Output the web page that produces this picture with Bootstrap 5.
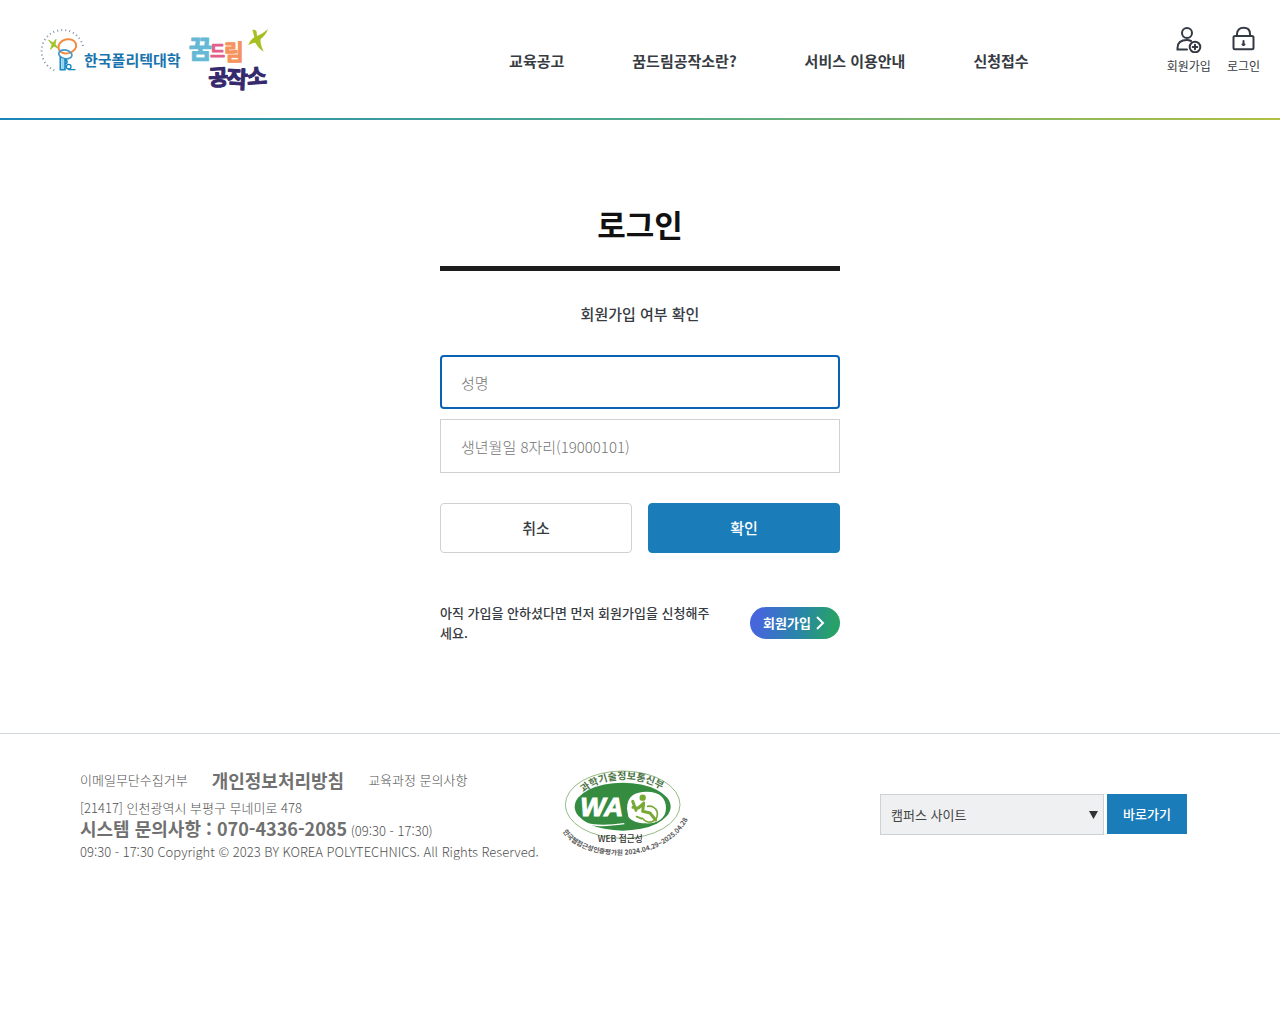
<!DOCTYPE html>
<html lang="ko">
<head>
<meta charset="utf-8">
<meta name="viewport" content="width=device-width, initial-scale=1">
<title>로그인 - 꿈드림공작소</title>
<link href="https://cdn.jsdelivr.net/npm/bootstrap@5.3.0/dist/css/bootstrap.min.css" rel="stylesheet">
<style>
  body { font-family: "Noto Sans CJK KR", "Noto Sans", sans-serif; font-size: 13px; line-height: 20px; color: #373b42; background: #fff; }
  a { color: inherit; text-decoration: none; }
  .medium { font-weight: 500; }
  .site-header { border-bottom: 2px solid; border-image: linear-gradient(90deg, #1a86b8, #51a98c 50%, #b0c043) 1; }
  .header-inner { min-height: 118px; padding: 26px 20px 0 38px; }
  .brand-col { min-width: 333px; }
  .main-menu { gap: 68px; padding-top: 24px; font-size: 15px; line-height: 22px; font-weight: 700; }
  .util-menu { gap: 16px; font-size: 12px; line-height: 18px; }
  .util-menu svg { display: block; margin: 0 auto 4px; }
  .login-box { width: 100%; max-width: 400px; padding: 80px 0 90px; }
  .login-title { font-size: 31px; line-height: 48px; font-weight: 700; color: #111; padding-bottom: 18px; margin-bottom: 32px; border-bottom: 5px solid #1c1c1c; }
  .login-sub { font-size: 15px; line-height: 22px; margin-bottom: 30px; }
  .login-input, .login-input:focus { height: 54px; padding: 0 20px; border: 1px solid #d0d0d0; border-radius: 0; font-size: 15px; box-shadow: none; margin-bottom: 10px; }
  .login-input::placeholder { color: #757575; font-weight: 300; }
  .login-input:focus { border: 2px solid #0a62b4; border-radius: 4px; padding: 0 19px; }
  .login-actions { margin: 30px 0 50px; }
  .btn-login { height: 50px; font-size: 15px; border-radius: 4px; padding: 0; border: 1px solid #d0d0d0; color: #373b42; }
  .btn-ok, .btn-go { background: #1a7cb9; border-color: #1a7cb9; color: #fff; }
  .join-text { max-width: 270px; }
  .join-pill { width: 90px; height: 32px; font-weight: 700; color: #fff; background: linear-gradient(100deg, #4666dc 10%, #2886a8 55%, #28a168 90%); }
  .site-footer { border-top: 1px solid #d2dadd; color: #505050; font-weight: 300; }
  .footer-inner { padding: 34px 80px 0; }
  .footer-info { width: 460px; margin-right: 21px; }
  .footer-links { gap: 24px; line-height: 24px; margin-bottom: 6px; }
  .emph { font-size: 18px; font-weight: 700; line-height: 20px; color: #707070; }
  .copy-line { line-height: 22px; }
  .site-jump { gap: 3px; margin: 26px 13px 0 auto; }
  .site-select { width: 224px; height: 41px; border: 1px solid #cfd2d4; background: #eef0f1; color: #444; padding: 0 10px; appearance: none; font-size: 13px; border-radius: 0; }
  .select-arrow { right: 6px; top: 17px; pointer-events: none; }
  .btn-go { width: 80px; height: 40px; font-size: 13px; border-radius: 0; padding: 0; border: 0; }
  .btn-go:hover, .btn-ok:hover { background: #15699e; color: #fff; }
</style>
</head>
<body>
<header class="site-header">
  <div class="header-inner d-flex align-items-start">
    <div class="brand-col">
      <a href="#" aria-label="한국폴리텍대학 꿈드림공작소">
        <svg class="d-block" width="232" height="68" viewBox="24 18 696 204" fill="none" stroke-linecap="round" stroke-linejoin="round">
          <path d="M73 151A63 63 0 1 1 160 84" stroke="#8296a8" stroke-width="6" stroke-dasharray="3 9" stroke-linecap="butt"/>
          <path d="M57 61 69 69 78 58 75 72 83 84 72 78 62 88 66 75Z" fill="#a3c52f" stroke="#a3c52f" stroke-width="3"/>
          <ellipse cx="112" cy="79" rx="27" ry="21" transform="rotate(-15 112 79)" stroke="#ef8c43" stroke-width="6"/>
          <ellipse cx="106" cy="103" rx="20" ry="13" transform="rotate(12 106 103)" stroke="#4698cd" stroke-width="5"/>
          <path d="M91 148V112M91 149H105V118C112 120 114 130 106 131" stroke="#1687c4" stroke-width="5"/>
          <path d="M98 143V119" stroke="#8cd0ea" stroke-width="7"/>
          <circle cx="116" cy="140" r="7" stroke="#1687c4" stroke-width="4"/>
          <path d="M116 149H135" stroke="#1687c4" stroke-width="4"/>
          <g font-family="Noto Sans CJK KR, sans-serif" font-weight="700">
            <text x="162" y="139" font-size="45" fill="#1874ae">한국폴리텍대학</text>
            <g font-weight="700" stroke-width="3">
              <text x="476" y="114" font-size="76" fill="#65b9d4" stroke="#65b9d4">꿈</text>
              <text x="541" y="112" font-size="48" fill="#e45c8c" stroke="#e45c8c">드</text>
              <text x="582" y="119" font-size="64" fill="#f4935d" stroke="#f4935d">림</text>
              <text x="534" y="196" font-size="66" fill="#35286c" stroke="#35286c" transform="rotate(-4 565 170)">공</text>
              <text x="590" y="203" font-size="70" fill="#35286c" stroke="#35286c" transform="rotate(3 615 170)">작</text>
              <text x="650" y="193" font-size="66" fill="#35286c" stroke="#35286c" transform="rotate(-4 680 170)">소</text>
            </g>
          </g>
          <path d="M667 29C674 29 679 30 680 36L681 48C694 43 704 36 714 27C709 42 699 52 692 57C690 67 694 79 701 95C688 86 680 76 676 68C669 68 662 71 655 76C658 65 665 57 673 52C671 43 670 37 667 29Z" fill="#a8bf22"/>
        </svg>
      </a>
    </div>
    <nav class="main-menu d-flex flex-fill justify-content-center text-nowrap" aria-label="주 메뉴">
      <a href="#">교육공고</a><a href="#">꿈드림공작소란?</a><a href="#">서비스 이용안내</a><a href="#">신청접수</a>
    </nav>
    <div class="util-menu d-flex text-center text-nowrap">
      <a href="#">
        <svg width="27" height="27" viewBox="0 0 27 27" fill="none" stroke="#343a43" stroke-width="2" stroke-linecap="round"><circle cx="12" cy="7" r="5"/><path d="M12 23.500H2.500V22C2.500 16 7 14 12 14Q14 14 16 15"/><circle cx="20" cy="21" r="5.300"/><path d="M20 18.700V23.300M17.700 21H22.300"/></svg>
        회원가입</a>
      <a href="#">
        <svg width="27" height="27" viewBox="0 0 27 27" fill="none" stroke="#343a43" stroke-width="2" stroke-linecap="round"><rect x="3.500" y="10" width="20" height="13.300" rx="1.500"/><path d="M7 10V8C7 4 9.500 1.800 13.500 1.800S20 4 20 8V10M13.500 15V19"/><path d="M12.500 18.500H14.500"/></svg>
        로그인</a>
    </div>
  </div>
</header>

<main class="login-box mx-auto">
  <h1 class="login-title text-center">로그인</h1>
  <p class="login-sub medium text-center">회원가입 여부 확인</p>
  <form onsubmit="return false">
    <label class="visually-hidden" for="userName">성명</label>
    <input class="form-control login-input" id="userName" type="text" placeholder="성명" autofocus>
    <label class="visually-hidden" for="birth">생년월일 8자리</label>
    <input class="form-control login-input" id="birth" type="text" placeholder="생년월일 8자리(19000101)">
    <div class="login-actions d-flex gap-3">
      <button class="btn btn-login medium flex-fill w-50" type="button">취소</button>
      <button class="btn btn-login btn-ok medium flex-fill w-50" type="submit">확인</button>
    </div>
  </form>
  <div class="d-flex justify-content-between align-items-center">
    <p class="join-text medium mb-0">아직 가입을 안하셨다면 먼저 회원가입을 신청해주세요.</p>
    <a class="join-pill rounded-pill d-flex align-items-center justify-content-center gap-1" href="#">회원가입
      <svg width="12" height="16" viewBox="0 0 12 16" fill="none" stroke="#fff" stroke-width="2"><path d="m2 2 6 6-6 6"/></svg></a>
  </div>
</main>

<footer class="site-footer">
  <div class="footer-inner d-flex align-items-start">
    <div class="footer-info text-nowrap">
      <div class="footer-links d-flex align-items-center"><a href="#">이메일무단수집거부</a><a class="emph" href="#">개인정보처리방침</a><a href="#">교육과정 문의사항</a></div>
      <address class="mb-0">[21417] 인천광역시 부평구 무네미로 478</address>
      <div><span class="emph">시스템 문의사항 : 070-4336-2085</span> (09:30 - 17:30)</div>
      <div class="copy-line">09:30 - 17:30 Copyright © 2023 BY KOREA POLYTECHNICS. All Rights Reserved.</div>
    </div>
    <a href="#" aria-label="WEB 접근성 품질인증">
      <svg class="d-block" width="128" height="92" viewBox="18 12 384 276" font-family="Noto Sans CJK KR, sans-serif" font-weight="700">
        <defs>
          <path id="sealTop" d="M86 87C145 34 263 30 342 92"/>
          <path id="sealBottom" d="M24 202C75 296 330 310 402 160"/>
        </defs>
        <ellipse cx="203" cy="122" rx="172" ry="101" fill="#fff" stroke="#93bb84" stroke-width="3"/>
        <ellipse cx="203" cy="128" rx="144" ry="72" fill="#358c40"/>
        <path d="M67 160C90 190 150 187 208 179" fill="none" stroke="#fff" stroke-width="4"/>
        <path d="M216 134C216 96 240 83 275 83C315 83 333 103 333 132C333 164 306 180 270 178C246 177 229 170 220 158Z" fill="#fff"/>
        <text x="76" y="156" font-family="Liberation Sans, sans-serif" font-size="80" font-style="italic" fill="#fff" stroke="#fff" stroke-width="3">WA</text>
        <g fill="none" stroke="#78a936" stroke-width="9" stroke-linecap="round" stroke-linejoin="round">
          <circle cx="263" cy="101" r="5" fill="#78a936"/>
          <path d="M266 117 263 142 285 147 302 168M264 120 250 132 234 130M233 112 243 139"/>
          <path d="M278 127A24 24 0 1 1 263 163" stroke-width="5"/>
          <path d="M245 158 260 164" stroke-width="6"/>
        </g>
        <text font-size="30" fill="#4d7547"><textPath href="#sealTop">과학기술정보통신부</textPath></text>
        <text x="128" y="234" font-size="26" font-weight="500" fill="#333">WEB 접근성</text>
        <text font-size="20" fill="#555"><textPath href="#sealBottom">한국웹접근성인증평가원 2024.04.29~2025.04.28</textPath></text>
      </svg>
    </a>
    <form class="site-jump d-flex" onsubmit="return false">
      <div class="position-relative">
        <label class="visually-hidden" for="campus">캠퍼스 사이트</label>
        <select class="site-select" id="campus"><option>캠퍼스 사이트</option></select>
        <svg class="select-arrow position-absolute" width="9" height="8" viewBox="0 0 9 8"><path d="M0 0H9L4.500 8Z" fill="#333"/></svg>
      </div>
      <button class="btn btn-go medium" type="submit">바로가기</button>
    </form>
  </div>
</footer>
<script src="https://cdn.jsdelivr.net/npm/bootstrap@5.3.0/dist/js/bootstrap.bundle.min.js"></script>
</body>
</html>
